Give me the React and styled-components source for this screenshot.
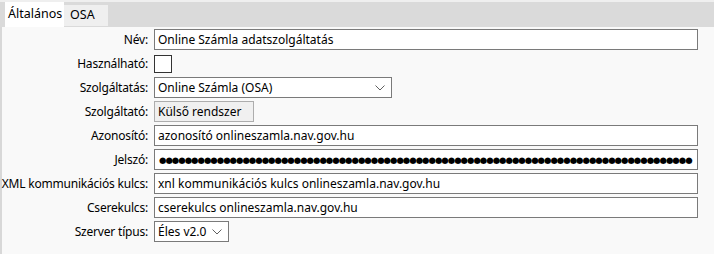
import React from "react";
import styled, { createGlobalStyle } from "styled-components";

const GlobalStyle = createGlobalStyle`
  html, body {
    margin: 0;
    padding: 0;
    background: #f9f9f9;
  }
  body {
    font-family: "Noto Sans", "Open Sans", sans-serif;
    font-size: 12px;
    color: #000;
  }
`;

const Window = styled.div`
  width: 714px;
  height: 254px;
  display: flex;
  flex-direction: column;
  overflow: hidden;
  background: #f9f9f9;
`;

const TabBar = styled.div`
  height: 27px;
  box-sizing: border-box;
  display: flex;
  align-items: flex-end;
  padding-left: 5px;
  background: #dadada;
  border-top: 2px solid #efefef;
`;

const Tab = styled.div`
  box-sizing: border-box;
  height: ${(p) => (p.$active ? "25px" : "21px")};
  margin-bottom: ${(p) => (p.$active ? "0" : "1px")};
  padding: 0 ${(p) => (p.$active ? "3px" : "6px")};
  width: ${(p) => p.$w}px;
  display: flex;
  align-items: center;
  background: ${(p) => (p.$active ? "#ffffff" : "#efefef")};
  font-size: 12.5px;
  line-height: 1;
`;

const Body = styled.div`
  flex: 1;
  border-left: 2px solid #d8d8d8;
  padding: 2px 16px 0 0;
  display: grid;
  grid-template-columns: 146px 1fr;
  column-gap: 6px;
  row-gap: 3px;
  grid-auto-rows: 21px;
  align-content: start;
`;

const Label = styled.label`
  display: flex;
  align-items: center;
  justify-content: flex-end;
  white-space: nowrap;
  letter-spacing: -0.2px;
`;

const Field = styled.div`
  box-sizing: border-box;
  height: 21px;
  min-width: 0;
  width: ${(p) => (p.$w ? `${p.$w}px` : "100%")};
  border: 1px solid ${(p) => (p.$readonly ? "#adadad" : "#7a7a7a")};
  background: ${(p) => (p.$readonly ? "#f0f0f0" : "#ffffff")};
  display: flex;
  align-items: center;
  padding: 0 3px;
  white-space: nowrap;
  overflow: hidden;
`;

const Dots = styled.span`
  font-family: "DejaVu Sans", sans-serif;
  font-size: 8.5px;
  letter-spacing: -1px;
  color: #000;
  padding-left: 1px;
`;

const SelectBox = styled(Field)`
  justify-content: space-between;
  padding-right: 6px;
`;

const Check = styled.div`
  box-sizing: border-box;
  width: 18px;
  height: 18px;
  margin-top: 2px;
  border: 1px solid #333;
  background: #fff;
`;

const Chevron = () => (
  <svg width="10" height="6" viewBox="0 0 10 6">
    <path d="M0.5 0.5 L5 5 L9.5 0.5" fill="none" stroke="#606060" strokeWidth="1" />
  </svg>
);

const Select = ({ value, w }) => (
  <SelectBox $w={w}>
    <span>{value}</span>
    <Chevron />
  </SelectBox>
);

export default function App() {
  const dots = "●".repeat(83);
  return (
    <Window>
      <GlobalStyle />
      <TabBar>
        <Tab $active $w={59}>Általános</Tab>
        <Tab $w={44}>OSA</Tab>
      </TabBar>
      <Body>
        <Label>Név:</Label>
        <Field>Online Számla adatszolgáltatás</Field>

        <Label>Használható:</Label>
        <div>
          <Check />
        </div>

        <Label>Szolgáltatás:</Label>
        <Select value="Online Számla (OSA)" w={238} />

        <Label>Szolgáltató:</Label>
        <Field $readonly $w={100}>Külső rendszer</Field>

        <Label>Azonosító:</Label>
        <Field>azonosító onlineszamla.nav.gov.hu</Field>

        <Label>Jelszó:</Label>
        <Field>
          <Dots>{dots}</Dots>
        </Field>

        <Label>XML kommunikációs kulcs:</Label>
        <Field>xnl kommunikációs kulcs onlineszamla.nav.gov.hu</Field>

        <Label>Cserekulcs:</Label>
        <Field>cserekulcs onlineszamla.nav.gov.hu</Field>

        <Label>Szerver típus:</Label>
        <Select value="Éles v2.0" w={75} />
      </Body>
    </Window>
  );
}
